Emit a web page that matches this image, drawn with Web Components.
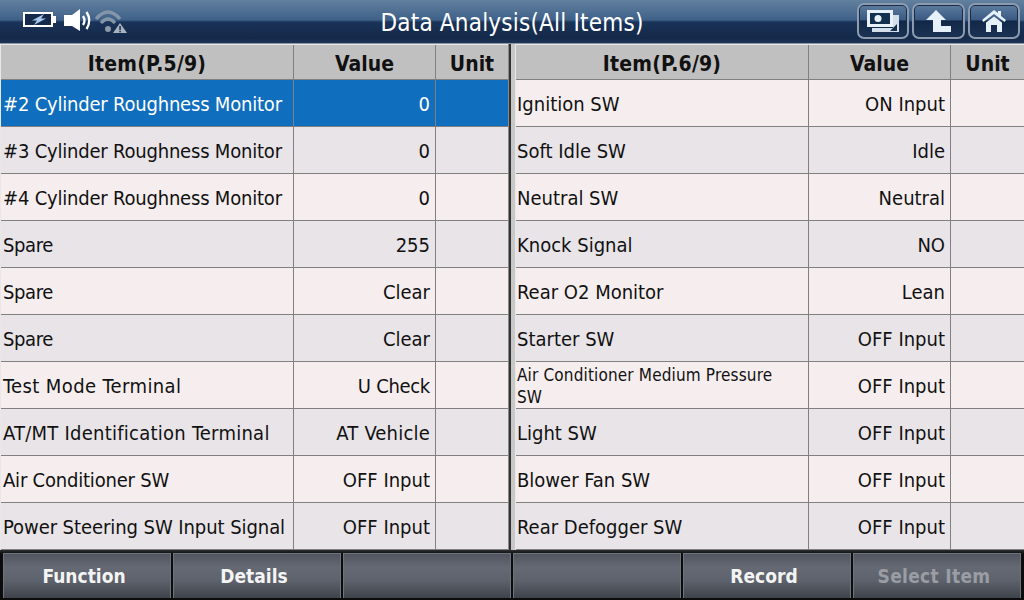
<!DOCTYPE html>
<html>
<head>
<meta charset="utf-8">
<title>Data Analysis</title>
<style>
html, body { margin: 0; padding: 0; background: #000; }
body { width: 1024px; height: 600px; overflow: hidden; display: flex; flex-direction: column; font-family: "DejaVu Sans Condensed", "DejaVu Sans", sans-serif; }
.a { letter-spacing: -0.2px; }
.b { letter-spacing: -0.4px; }
.c { letter-spacing: 0.4px; }
.d { letter-spacing: 0.25px; }
.e { letter-spacing: -0.07px; }
.f { letter-spacing: -0.3px; }
.g { letter-spacing: 0.2px; }
</style>
</head>
<body>
<app-header title-text="Data Analysis(All Items)"></app-header>
<main-split>
  <data-table slot="left" page="Item(P.5/9)">
    <data-row selected><span slot="item" class="a">#2 Cylinder Roughness Monitor</span><span slot="value">0</span></data-row>
    <data-row tone="gray"><span slot="item" class="a">#3 Cylinder Roughness Monitor</span><span slot="value">0</span></data-row>
    <data-row><span slot="item" class="a">#4 Cylinder Roughness Monitor</span><span slot="value">0</span></data-row>
    <data-row tone="gray"><span slot="item" class="b">Spare</span><span slot="value">255</span></data-row>
    <data-row><span slot="item" class="b">Spare</span><span slot="value">Clear</span></data-row>
    <data-row tone="gray"><span slot="item" class="b">Spare</span><span slot="value">Clear</span></data-row>
    <data-row><span slot="item" class="c">Test Mode Terminal</span><span slot="value" class="f">U Check</span></data-row>
    <data-row tone="gray"><span slot="item" class="d">AT/MT Identification Terminal</span><span slot="value" class="g">AT Vehicle</span></data-row>
    <data-row><span slot="item" class="a">Air Conditioner SW</span><span slot="value">OFF Input</span></data-row>
    <data-row tone="gray"><span slot="item" class="e">Power Steering SW Input Signal</span><span slot="value">OFF Input</span></data-row>
  </data-table>
  <data-table slot="right" page="Item(P.6/9)" side="right">
    <data-row><span slot="item">Ignition SW</span><span slot="value">ON Input</span></data-row>
    <data-row tone="gray"><span slot="item">Soft Idle SW</span><span slot="value">Idle</span></data-row>
    <data-row><span slot="item">Neutral SW</span><span slot="value">Neutral</span></data-row>
    <data-row tone="gray"><span slot="item">Knock Signal</span><span slot="value">NO</span></data-row>
    <data-row><span slot="item">Rear O2 Monitor</span><span slot="value">Lean</span></data-row>
    <data-row tone="gray"><span slot="item">Starter SW</span><span slot="value">OFF Input</span></data-row>
    <data-row small><span slot="item">Air Conditioner Medium Pressure SW</span><span slot="value">OFF Input</span></data-row>
    <data-row tone="gray"><span slot="item">Light SW</span><span slot="value">OFF Input</span></data-row>
    <data-row><span slot="item">Blower Fan SW</span><span slot="value">OFF Input</span></data-row>
    <data-row tone="gray"><span slot="item">Rear Defogger SW</span><span slot="value">OFF Input</span></data-row>
  </data-table>
</main-split>
<tool-bar>
  <tool-button>Function</tool-button>
  <tool-button>Details</tool-button>
  <tool-button></tool-button>
  <tool-button></tool-button>
  <tool-button>Record</tool-button>
  <tool-button disabled>Select Item</tool-button>
</tool-bar>

<script>
class AppHeader extends HTMLElement {
  connectedCallback() {
    const root = this.attachShadow({ mode: 'open' });
    root.innerHTML = `
<style>
:host { display: flex; height: 44px; box-sizing: border-box; flex: none; border-bottom: 1px solid #8d98a6;
  background: linear-gradient(#62809f 0, #3f6189 20px, #1a3358 22px, #14294a 38px, #1c3555 43px); }
.status { padding: 8px 0 0 23px; width: 300px; box-sizing: border-box; }
.status svg { display: block; }
h1 { flex: 1; margin: 0; text-align: center; font: normal 24px/46px "DejaVu Sans Condensed", sans-serif; letter-spacing: 0.2px; color: #fff; }
.btns { width: 300px; display: flex; justify-content: flex-end; align-items: flex-start; gap: 3px; padding: 3px 4px 0 0; box-sizing: border-box; }
.btn { width: 52px; height: 36px; box-sizing: border-box; border: 2px solid #8b9bb0; border-radius: 7px;
  display: flex; align-items: center; justify-content: center;
  background: linear-gradient(#5d7c9e 0, #3a5a84 46%, #132848 50%, #1a3354 100%); box-shadow: inset 0 0 0 1px #1a2c48; }
.btn.wide { width: 53px; }
.btn svg { display: block; }
</style>
<div class="status">
  <svg width="105" height="26" viewBox="0 0 105 26">
    <rect x="1" y="5" width="28" height="13" fill="#15294a" stroke="#fff" stroke-width="2"/>
    <rect x="30" y="8" width="3" height="7" fill="#fff"/>
    <path d="M21 6 L9 12.5 L14 12.5 L11 17 L23 10.5 L18 10.5 Z" fill="#a9c8ee"/>
    <path d="M41 7 H49 L57 1 V23 L49 18 H41 Z" fill="#fff"/>
    <path d="M60 8 Q63 12.5 60 17" fill="none" stroke="#fff" stroke-width="2.4"/>
    <path d="M63.5 4 Q69 12.5 63.5 21" fill="none" stroke="#fff" stroke-width="2.4"/>
    <path d="M73 11 Q85 -3 97 11" fill="none" stroke="#8595a8" stroke-width="3.4"/>
    <path d="M78 15 Q85 7 92 15" fill="none" stroke="#8595a8" stroke-width="3.4"/>
    <circle cx="85" cy="21" r="3" fill="#8c99aa"/>
    <path d="M97 15 L104 25 H90 Z" fill="#a9b3bf"/>
    <rect x="96.3" y="18" width="1.5" height="4" fill="#16294a"/>
    <rect x="96.3" y="22.8" width="1.5" height="1.5" fill="#16294a"/>
  </svg>
</div>
<h1>${this.getAttribute('title-text')}</h1>
<div class="btns">
  <div class="btn"><svg width="32" height="22" viewBox="0 0 32 22">
    <rect x="5" y="5" width="27" height="17" fill="#d3e0ec"/>
    <rect x="0" y="0" width="26" height="17" fill="#e8f1f8"/>
    <path d="M0 17 H26 V18 H0 Z" fill="#15294a"/>
    <rect x="3" y="3" width="20" height="11" fill="#14304f"/>
    <circle cx="11" cy="8.5" r="3.5" fill="#e8f1f8"/>
    <path d="M23 21 L30 21 L30 14 Z" fill="#14304f"/>
  </svg></div>
  <div class="btn wide"><svg width="25" height="22" viewBox="0 0 25 22">
    <path d="M10 0 L20 10 H15 V16 H25 V22 H7 V10 H0 Z" fill="#e6f0f8"/>
  </svg></div>
  <div class="btn"><svg width="24" height="22" viewBox="0 0 24 22">
    <path d="M12 0 L16 3 V1 H19 V6 L24 10 L22.5 12 L12 4 L1.5 12 L0 10 Z" fill="#e6f0f8"/>
    <path d="M12 6.5 L20 12.5 V22 H15 V15 H9 V22 H4 V12.5 Z" fill="#e6f0f8"/>
  </svg></div>
</div>`;
  }
}
customElements.define('app-header', AppHeader);

class MainSplit extends HTMLElement {
  constructor() {
    super();
    const root = this.attachShadow({ mode: 'open' });
    root.innerHTML = `
<style>
:host { display: grid; grid-template-columns: 509px 513px; column-gap: 2px; flex: none; height: 506px; background: #333; }
</style>
<slot name="left"></slot><slot name="right"></slot>`;
  }
}
customElements.define('main-split', MainSplit);

class DataTable extends HTMLElement {
  connectedCallback() {
    const root = this.attachShadow({ mode: 'open' });
    root.innerHTML = `
<style>
:host { display: flex; flex-direction: column; height: 506px; box-sizing: border-box; border-left: 1px solid #e8e8e8; border-right: 1px solid #8a8a8a; background: #808080; --pad: 2px; }
:host([side="right"]) { border-right: 0; border-left: 0; padding-left: 4px; background: #c8c8c8; --pad: 1px; }
:host([side="right"]) .wrap { border-left: 1px solid #e8e8e8; }
.wrap { flex: 1; min-height: 0; display: flex; flex-direction: column; }
.head { display: grid; grid-template-columns: 292px 142px 1fr; height: 36px; flex: none; box-sizing: border-box; border-top: 1px solid #e8e8e8; border-bottom: 1px solid #808080; background: #c0c0c0;
  font: bold 21px/29px "DejaVu Sans Condensed", sans-serif; color: #111; text-align: center; }
.head div { padding-top: 5px; }
.head div + div { border-left: 1px solid #808080; }
.head div:first-child { letter-spacing: 0.2px; }
</style>
<div class="wrap">
<div class="head"><div>${this.getAttribute('page')}</div><div>Value</div><div>Unit</div></div>
<slot></slot>
</div>`;
  }
}
customElements.define('data-table', DataTable);

class DataRow extends HTMLElement {
  constructor() {
    super();
    const root = this.attachShadow({ mode: 'open' });
    root.innerHTML = `
<style>
:host { display: grid; grid-template-columns: 292px 142px 1fr; height: 47px; box-sizing: border-box; border-bottom: 1px solid #808080; background: #f6eeee; color: #111;
  font: 20px/1 "DejaVu Sans Condensed", sans-serif; }
:host([tone="gray"]) { background: #e8e4e8; }
:host([selected]) { background: #0f6ebe; color: #fff; }
:host([small]) .item { font-size: 17px; line-height: 22px; letter-spacing: 0.15px; padding-right: 20px; }
div { display: flex; align-items: center; box-sizing: border-box; overflow: hidden; padding-top: 2px; }
.item { padding-left: var(--pad, 2px); padding-right: 4px; }
.value { justify-content: flex-end; padding-right: 5px; border-left: 1px solid #808080; }
.unit { border-left: 1px solid #808080; }
</style>
<div class="item"><slot name="item"></slot></div>
<div class="value"><slot name="value"></slot></div>
<div class="unit"></div>`;
  }
}
customElements.define('data-row', DataRow);

class ToolBar extends HTMLElement {
  constructor() {
    super();
    const root = this.attachShadow({ mode: 'open' });
    root.innerHTML = `
<style>
:host { display: grid; grid-template-columns: repeat(6, 168px); height: 50px; flex: none; background: linear-gradient(#2a2e31 0, #0c0c0c 4px); box-sizing: border-box; padding: 3px 3px 2px 3px; column-gap: 2px; }
</style>
<slot></slot>`;
  }
}
customElements.define('tool-bar', ToolBar);

class ToolButton extends HTMLElement {
  constructor() {
    super();
    const root = this.attachShadow({ mode: 'open' });
    root.innerHTML = `
<style>
:host { display: flex; align-items: center; justify-content: center; box-sizing: border-box; height: 45px; border: 1px solid #6f747c; border-bottom: 0; padding-right: 6px;
  background: linear-gradient(#50555f 0, #646973 30%, #5d626c 60%, #3f434b 100%);
  font: bold 19px "DejaVu Sans Condensed", sans-serif; color: #f4f4f4; }
:host([disabled]) { color: #9a9da3; letter-spacing: 0.3px; }
</style>
<slot></slot>`;
  }
}
customElements.define('tool-button', ToolButton);
</script>
</body>
</html>
